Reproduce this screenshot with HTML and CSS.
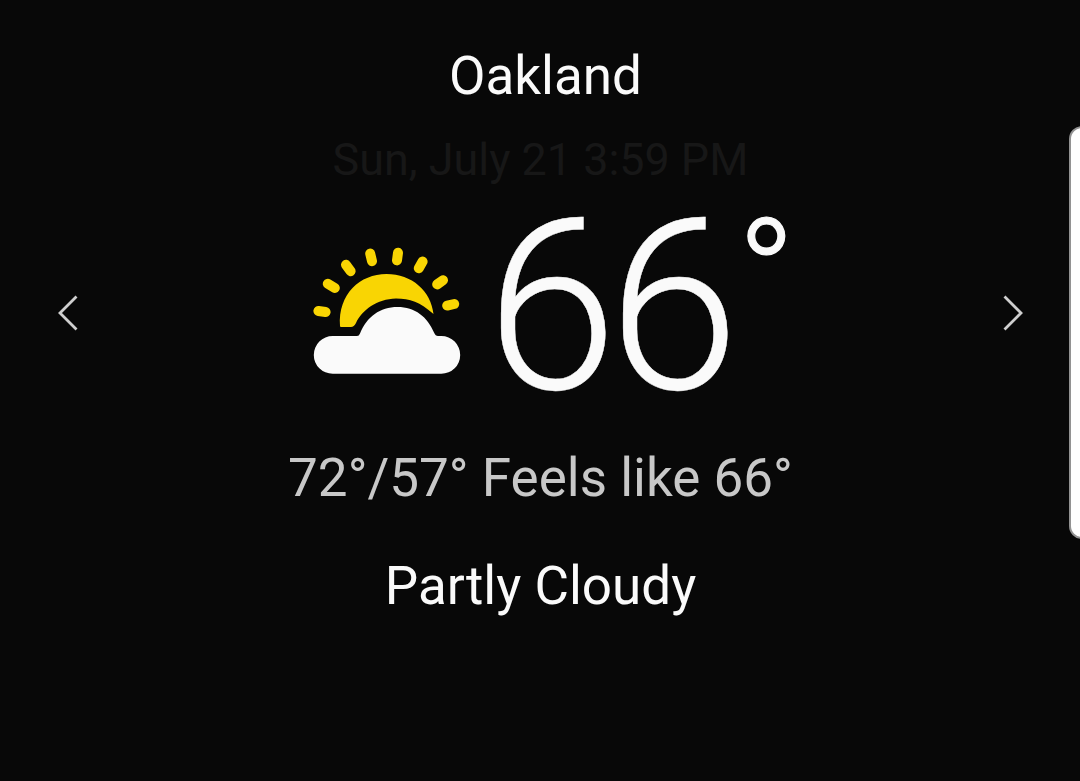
FILE: index.html
```html
<!DOCTYPE html>
<html lang="en">
<head>
<meta charset="utf-8">
<title>Weather</title>
<link rel="stylesheet" href="styles.css">
</head>
<body>
<main class="weather">
  <button class="nav nav-prev" aria-label="Previous city"><svg width="24" height="40" viewBox="0 0 24 40"><path d="M21.500 3.500 5 20l16.500 16.500"/></svg></button>
  <section class="report">
    <h1 class="city">Oakland</h1>
    <p class="date">Sun, July 21 3:59 PM</p>
    <div class="current">
      <svg class="icon" width="150" height="130" viewBox="312 246 150 130">
        <g class="rays">
          <path d="M318.400 311 325.600 312M327.800 283.800 334.800 288M346 264.800 350.600 271.200M370.200 253.600 372 261.200M398 252.800 397 260.400M422.600 261.600 418.800 268.200M443 280.200 437.200 284.400M454.200 304 447.200 305.600"/>
        </g>
        <path class="sun" d="M340 326C338 294 360 274 386.500 274C412 274 431 291 433.500 314C420 302 410 298.500 396 298.500C377 299 362 310 356 323Q354 327 351 327H341Q340 327 340 326Z"/>
        <path class="cloud" d="M332.700 336H357Q359 336 360 333.500C367 316.500 380 307 397.500 307C415 307 427.500 317 434 332.500Q435.500 336 438 336H441.300A18.900 18.900 0 0 1 441.300 373.800H332.700A18.900 18.900 0 0 1 332.700 336Z"/>
      </svg>
      <div class="temp"><span class="digits">66</span><span class="degree">°</span></div>
    </div>
    <p class="range">72°/57° Feels like 66°</p>
    <p class="condition">Partly Cloudy</p>
  </section>
  <button class="nav nav-next" aria-label="Next city"><svg width="24" height="40" viewBox="0 0 24 40"><path d="M3.500 3.500 20 20 3.500 36.500"/></svg></button>
  <div class="edge-handle"></div>
</main>
</body>
</html>
```

FILE: styles.css
```css
* { box-sizing: border-box; margin: 0; padding: 0; }
body { background: #080808; font-family: Roboto, sans-serif; }
.weather {
  position: relative;
  display: flex;
  justify-content: space-between;
  width: 1080px;
  height: 781px;
  padding: 45px 55px 0;
  overflow: hidden;
}
.nav { height: 40px; margin-top: 248px; border: 0; background: none; }
.nav svg { display: block; fill: none; stroke: #cfcfcf; stroke-width: 2.8; }
.report {
  display: flex;
  flex-direction: column;
  align-items: center;
  white-space: nowrap;
}
.city, .range, .condition { font-size: 53px; line-height: 62px; font-weight: 400; }
.city { color: #fafafa; padding-left: 11px; }
.date { margin-top: 26px; padding-left: 1px; font-size: 44.9px; line-height: 54px; color: #171717; }
.current {
  display: flex;
  width: 456px;
  height: 174px;
  margin-top: 30px;
  padding-top: 29px;
}
.icon { display: block; flex: none; }
.rays { fill: none; stroke: #f9d503; stroke-width: 10; stroke-linecap: round; }
.sun { fill: #f9d503; }
.cloud { fill: #fafafa; }
.temp { display: flex; margin: -26px 0 0 24px; color: #fafafa; }
.digits {
  width: 250px;
  font-size: 240px;
  line-height: 174px;
  font-weight: 300;
  letter-spacing: -9.3px;
  transform: scaleX(.985);
  transform-origin: left;
  -webkit-text-stroke: .4px #fafafa;
}
.degree {
  margin: -8px 0 0 1px;
  font-size: 155px;
  line-height: 130px;
  font-weight: 300;
  -webkit-text-stroke: 1.2px #fafafa;
}
.range { margin-top: 56px; padding-left: 1px; color: #c8c8c8; }
.condition { margin-top: 46px; padding-left: 1px; color: #fafafa; }
.edge-handle {
  position: absolute;
  top: 126px;
  right: -20px;
  width: 31px;
  height: 413px;
  border: 2px solid #929292;
  border-radius: 13px;
  background: #fff;
}
```
